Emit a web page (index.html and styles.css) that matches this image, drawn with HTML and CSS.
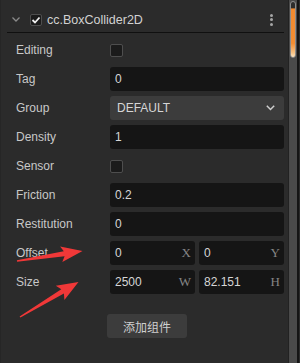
FILE: index.html
```html
<!DOCTYPE html>
<html lang="en">
<head>
    <meta charset="UTF-8">
    <meta name="viewport" content="width=device-width, initial-scale=1.0">
    <title>BoxCollider2D Inspector</title>
    <link rel="stylesheet" href="styles.css">
</head>
<body>
    <div class="inspector">
        <div class="panel">
            <div class="comp-header">
                <svg class="fold" width="8" height="5" viewBox="0 0 8 5"><path d="M0.5 0.5 L4 4 L7.5 0.5" fill="none" stroke="#8a8a8a" stroke-width="1.3"/></svg>
                <span class="checkbox checked">
                    <svg width="10" height="10" viewBox="0 0 10 10"><path d="M1.5 5 L4 7.5 L8.5 2.5" fill="none" stroke="#f0f0f0" stroke-width="1.8"/></svg>
                </span>
                <span class="comp-title">cc.BoxCollider2D</span>
                <span class="menu-dots"><i></i><i></i><i></i></span>
            </div>

            <div class="props">
                <div class="prop">
                    <label>Editing</label>
                    <div class="control"><span class="checkbox"></span></div>
                </div>
                <div class="prop">
                    <label>Tag</label>
                    <div class="control"><div class="field">0</div></div>
                </div>
                <div class="prop">
                    <label>Group</label>
                    <div class="control">
                        <div class="select">
                            <span>DEFAULT</span>
                            <svg width="9" height="6" viewBox="0 0 9 6"><path d="M0.8 0.8 L4.5 4.5 L8.2 0.8" fill="none" stroke="#cfcfcf" stroke-width="1.5"/></svg>
                        </div>
                    </div>
                </div>
                <div class="prop">
                    <label>Density</label>
                    <div class="control"><div class="field">1</div></div>
                </div>
                <div class="prop">
                    <label>Sensor</label>
                    <div class="control"><span class="checkbox"></span></div>
                </div>
                <div class="prop">
                    <label>Friction</label>
                    <div class="control"><div class="field">0.2</div></div>
                </div>
                <div class="prop">
                    <label>Restitution</label>
                    <div class="control"><div class="field">0</div></div>
                </div>
                <div class="prop">
                    <label>Offset</label>
                    <div class="control vec">
                        <div class="field"><span>0</span><em>X</em></div>
                        <div class="field"><span>0</span><em>Y</em></div>
                    </div>
                </div>
                <div class="prop">
                    <label>Size</label>
                    <div class="control vec">
                        <div class="field"><span>2500</span><em>W</em></div>
                        <div class="field"><span>82.151</span><em>H</em></div>
                    </div>
                </div>
            </div>

            <div class="add-row">
                <button class="add-btn">添加组件</button>
            </div>
        </div>

        <div class="scrollbar">
            <div class="thumb"></div>
        </div>
    </div>

    <!-- red annotation arrows drawn over the panel -->
    <svg class="annotations" width="300" height="363" viewBox="0 0 300 363">
        <polygon fill="#f03838" points="16.9,260.3 63.8,251.2 60.1,246.4 82.5,251 62.3,262 64.6,256.2 17.1,261.7"/>
        <polygon fill="#f03838" points="19.6,316.4 61.3,289.2 55.8,285.8 78.5,282 64.4,300 63.9,293.4 20.4,317.6"/>
    </svg>
</body>
</html>
```

FILE: styles.css
```css
html, body {
    margin: 0;
    padding: 0;
}

body {
    width: 300px;
    height: 363px;
    background-color: #2b2b2b;
    font-family: "Liberation Sans", Arial, "Noto Sans CJK SC", sans-serif;
    font-size: 12px;
    color: #cccccc;
    position: relative;
    overflow: hidden;
}

.inspector {
    display: flex;
    height: 363px;
}

.panel {
    flex: 1;
    border-left: 1px solid #262626;
}

.comp-header {
    display: flex;
    align-items: center;
    height: 33px;
    margin: 0 4px 0 6px;
    border-bottom: 1px solid #101010;
    box-sizing: border-box;
    padding-top: 7px;
}

.fold {
    margin-left: 5px;
    margin-right: 10px;
}

.checkbox {
    display: inline-flex;
    justify-content: center;
    align-items: center;
    width: 13px;
    height: 13px;
    box-sizing: border-box;
    background-color: #1b1b1b;
    border: 1px solid #4e4e4e;
    border-radius: 2px;
}

.comp-header .checkbox {
    width: 12px;
    height: 12px;
}

.comp-title {
    margin-left: 5px;
    font-size: 12.5px;
    color: #d2d2d2;
    flex: 1;
}

.menu-dots {
    display: flex;
    flex-direction: column;
    gap: 1.5px;
    margin-right: 11px;
}

.menu-dots i {
    display: block;
    width: 3px;
    height: 3px;
    border-radius: 50%;
    background-color: #a5a5a5;
}

.props {
    display: flex;
    flex-direction: column;
    gap: 5px;
    padding: 5px 4px 0 15px;
}

.prop {
    display: flex;
    align-items: center;
    height: 24px;
}

.prop label {
    width: 94px;
    color: #c8c8c8;
}

.control {
    flex: 1;
    display: flex;
    align-items: center;
}

.field {
    flex: 1;
    height: 24px;
    display: flex;
    align-items: center;
    justify-content: space-between;
    padding: 0 4px 0 5px;
    box-sizing: border-box;
    background-color: #151515;
    border-radius: 3px;
    color: #d6d6d6;
}

.vec {
    gap: 4px;
}

.vec em {
    font-style: normal;
    font-family: "Liberation Serif", "Times New Roman", serif;
    font-size: 13px;
    color: #858585;
}

.select {
    flex: 1;
    height: 24px;
    display: flex;
    align-items: center;
    justify-content: space-between;
    padding: 0 9px 0 7px;
    box-sizing: border-box;
    background-color: #3c3c3c;
    border-radius: 3px;
    color: #d6d6d6;
}

.add-row {
    display: flex;
    justify-content: center;
    padding: 20px 0 0 5px;
}

.add-btn {
    width: 80px;
    height: 24px;
    border: none;
    border-radius: 3px;
    background-color: #3c3c3c;
    color: #cfcfcf;
    font-family: "Liberation Sans", "Noto Sans CJK SC", sans-serif;
    font-size: 12px;
    padding: 0;
}

.scrollbar {
    width: 8px;
    margin-right: 1px;
    background-color: #4a4a4a;
    border-left: 1px solid #222;
    border-right: 2px solid #151515;
    position: relative;
}

.thumb {
    margin: 1px 0 0 1px;
    width: 6px;
    height: 57px;
    box-sizing: border-box;
    border: 1px solid #8c8c8c;
    border-radius: 3px;
    background: linear-gradient(to bottom, #2c2c2c 0%, #2c2c2c 10%, #f08a30 13%, #f28d33 75%, #f7c58a 93%, #fde6c4 100%);
}

.annotations {
    position: absolute;
    left: 0;
    top: 0;
    pointer-events: none;
}
```
